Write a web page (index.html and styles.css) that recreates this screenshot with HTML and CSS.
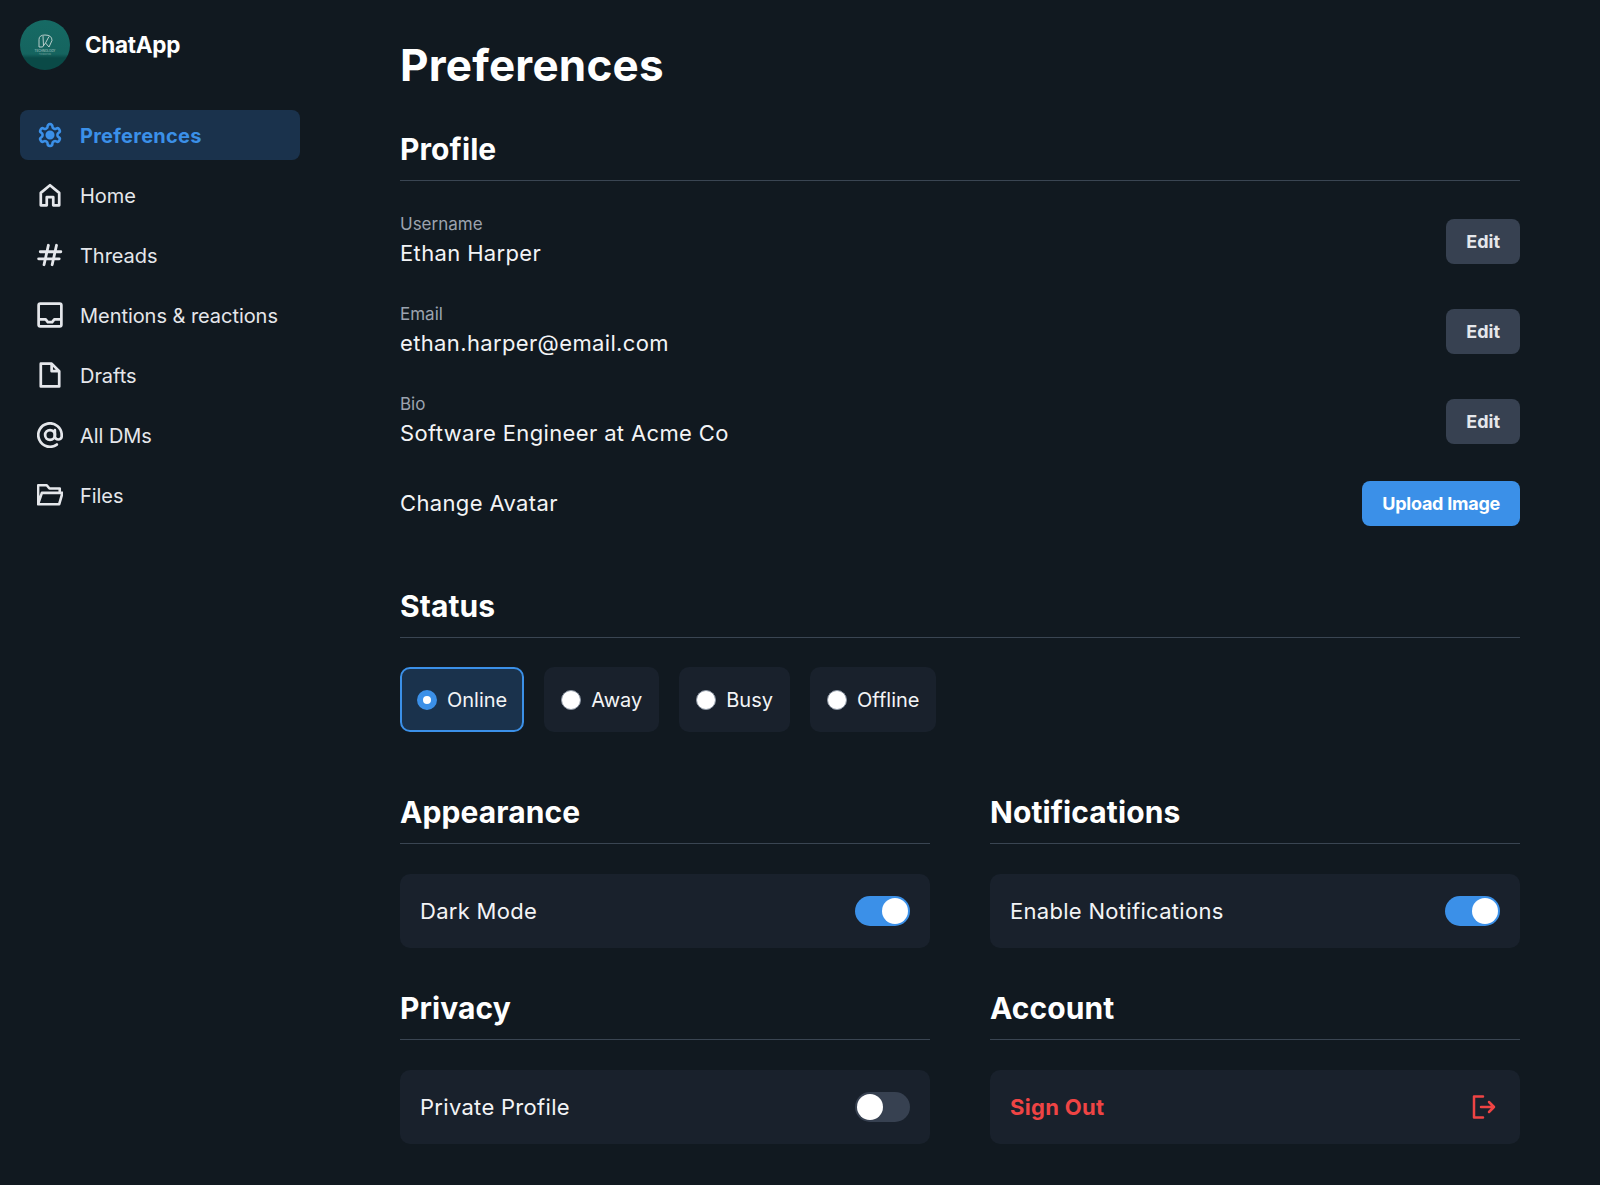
FILE: index.html

```html
<!DOCTYPE html>
<html lang="en">
<head>
  <meta charset="UTF-8" />
  <meta name="viewport" content="width=device-width, initial-scale=1.0"/>
  <title>Preferences - ChatApp</title>
  <link rel="stylesheet" href="styles.css">
</head>
<body>
  <div class="layout">
    <aside class="sidebar">
      <div class="brand">
        <div class="avatar">
          <svg viewBox="0 0 50 50" width="50" height="50">
            <path d="M19 27V19.500Q19 15 25 15Q32 15 32 20.500L29 27L25.500 23L22.500 27zM23 16L23.500 26M25.500 23L29 16.500" fill="none" stroke="#c9d8d6" stroke-width=".9"/>
            <text x="25" y="32" class="avatar-text">TECHNOLOGY</text>
            <text x="25" y="34.500" class="avatar-subtext">FOUNDATION</text>
          </svg>
        </div>
        <span class="brand-name">ChatApp</span>
      </div>
      <nav class="nav">
        <a class="nav-item active">
          <svg class="nav-icon" viewBox="0 0 24 24" fill="none" stroke="currentColor" stroke-width="2.400" stroke-linecap="round" stroke-linejoin="round"><path d="M12.220 2h-.44a2 2 0 0 0-2 2v.18a2 2 0 0 1-1 1.730l-.43.250a2 2 0 0 1-2 0l-.15-.08a2 2 0 0 0-2.730.730l-.22.380a2 2 0 0 0 .730 2.730l.15.100a2 2 0 0 1 1 1.720v.510a2 2 0 0 1-1 1.740l-.15.090a2 2 0 0 0-.730 2.730l.22.380a2 2 0 0 0 2.730.730l.15-.08a2 2 0 0 1 2 0l.43.250a2 2 0 0 1 1 1.730V20a2 2 0 0 0 2 2h.44a2 2 0 0 0 2-2v-.18a2 2 0 0 1 1-1.730l.43-.250a2 2 0 0 1 2 0l.15.080a2 2 0 0 0 2.730-.730l.22-.390a2 2 0 0 0-.730-2.730l-.15-.080a2 2 0 0 1-1-1.740v-.500a2 2 0 0 1 1-1.740l.15-.090a2 2 0 0 0 .730-2.730l-.22-.380a2 2 0 0 0-2.730-.730l-.15.080a2 2 0 0 1-2 0l-.43-.250a2 2 0 0 1-1-1.730V4a2 2 0 0 0-2-2z"/><circle cx="12" cy="12" r="3" fill="currentColor"/></svg>
          Preferences
        </a>
        <a class="nav-item">
          <svg class="nav-icon" viewBox="0 0 24 24" fill="none" stroke="currentColor" stroke-width="2.500" stroke-linejoin="round"><path d="M3.500 21.500V10l8.500-7 8.500 7v11.500h-5.500V14H9v7.500z"/></svg>
          Home
        </a>
        <a class="nav-item">
          <svg class="nav-icon" viewBox="0 0 24 24" fill="none" stroke="currentColor" stroke-width="2.600" stroke-linecap="round"><path d="M3 9h19M1.500 15.500h19M10.500 3L6.500 21M18 3L14 21"/></svg>
          Threads
        </a>
        <a class="nav-item">
          <svg class="nav-icon" viewBox="0 0 24 24" fill="none" stroke="currentColor" stroke-width="2.500" stroke-linejoin="round"><rect x="1.500" y="1.500" width="21" height="21" rx="1.500"/><path d="M2 16h6l2 2.500h4l2-2.500h6"/></svg>
          Mentions &amp; reactions
        </a>
        <a class="nav-item">
          <svg class="nav-icon" viewBox="0 0 24 24" fill="none" stroke="currentColor" stroke-width="2.500" stroke-linejoin="round"><path d="M3.500 1.500h10l7 7v14h-17zM13.500 1.500V8.500h7"/></svg>
          Drafts
        </a>
        <a class="nav-item">
          <svg class="nav-icon" viewBox="0 0 24 24" fill="none" stroke="currentColor" stroke-width="2.500" stroke-linecap="round"><circle cx="12" cy="12" r="4.500"/><path d="M16.500 7.500v6a3.200 3.200 0 0 0 6.300 0V12a10.800 10.800 0 1 0-4.500 8.800"/></svg>
          All DMs
        </a>
        <a class="nav-item">
          <svg class="nav-icon" viewBox="0 0 24 24" fill="none" stroke="currentColor" stroke-width="2.400" stroke-linejoin="round"><path d="M1 20.500V3h8l2.500 3h9.500v4M1 20.500h19.500l3-10.500H4.500z"/></svg>
          Files
        </a>
      </nav>
    </aside>

    <main class="main">
      <h1 class="page-title">Preferences</h1>

      <section class="profile">
        <h2 class="section-title">Profile</h2>
        <div class="field">
          <div>
            <div class="field-label">Username</div>
            <div class="field-value">Ethan Harper</div>
          </div>
          <button class="btn btn-edit">Edit</button>
        </div>
        <div class="field">
          <div>
            <div class="field-label">Email</div>
            <div class="field-value">ethan.harper@email.com</div>
          </div>
          <button class="btn btn-edit">Edit</button>
        </div>
        <div class="field">
          <div>
            <div class="field-label">Bio</div>
            <div class="field-value">Software Engineer at Acme Co</div>
          </div>
          <button class="btn btn-edit">Edit</button>
        </div>
        <div class="field avatar-field">
          <div class="field-value">Change Avatar</div>
          <button class="btn btn-primary">Upload Image</button>
        </div>
      </section>

      <section class="status">
        <h2 class="section-title">Status</h2>
        <div class="status-list">
          <label class="status-option selected"><span class="radio"></span>Online</label>
          <label class="status-option"><span class="radio"></span>Away</label>
          <label class="status-option"><span class="radio"></span>Busy</label>
          <label class="status-option"><span class="radio"></span>Offline</label>
        </div>
      </section>

      <div class="settings-grid">
        <section>
          <h2 class="section-title">Appearance</h2>
          <div class="card">
            <span>Dark Mode</span>
            <span class="toggle on"></span>
          </div>
        </section>
        <section>
          <h2 class="section-title">Notifications</h2>
          <div class="card">
            <span>Enable Notifications</span>
            <span class="toggle on"></span>
          </div>
        </section>
        <section>
          <h2 class="section-title">Privacy</h2>
          <div class="card">
            <span>Private Profile</span>
            <span class="toggle"></span>
          </div>
        </section>
        <section>
          <h2 class="section-title">Account</h2>
          <div class="card signout">
            <span>Sign Out</span>
            <svg viewBox="0 0 24 24" width="24" height="24" fill="none" stroke="currentColor" stroke-width="2.500" stroke-linecap="round" stroke-linejoin="round"><path d="M11 1.500H2v21h9M9 12h13M17 7l5 5-5 5"/></svg>
          </div>
        </section>
      </div>
    </main>
  </div>
</body>
</html>
```

FILE: styles.css

```css
* {
  box-sizing: border-box;
}
body {
  margin: 0;
  font-family: Inter, "Liberation Sans", sans-serif;
  background: #111920;
  color: #fff;
}
.layout {
  display: flex;
  min-height: 1185px;
}
.sidebar {
  width: 320px;
  flex-shrink: 0;
  padding: 20px;
}
.brand {
  display: flex;
  align-items: center;
  gap: 15px;
  margin-bottom: 40px;
}
.avatar {
  width: 50px;
  height: 50px;
  border-radius: 50%;
  overflow: hidden;
  background: linear-gradient(#166a64 0%, #15645f 68%, #0a4a47 76%, #0a4a47 100%);
}
.avatar svg {
  display: block;
}
.avatar-text {
  font-size: 3px;
  text-anchor: middle;
  fill: #b7d0cd;
}
.avatar-subtext {
  font-size: 1.800px;
  text-anchor: middle;
  fill: #7fa8a3;
}
.brand-name {
  margin-top: -2px;
  font-size: 22.500px;
  font-weight: 700;
  letter-spacing: -0.3px;
}
.nav {
  display: flex;
  flex-direction: column;
  gap: 10px;
}
.nav-item {
  display: flex;
  align-items: center;
  gap: 17px;
  height: 50px;
  padding: 2px 17px 0;
  border-radius: 8px;
  font-size: 20px;
  letter-spacing: -0.05px;
  color: #e5e7eb;
}
.nav-item.active {
  background: #1a324c;
  color: #3b90e8;
  font-weight: 700;
  letter-spacing: 0.25px;
}
.nav-icon {
  width: 26px;
  height: 26px;
  margin-top: -2px;
  flex-shrink: 0;
}
.main {
  flex: 1;
  padding: 30px 80px 0;
}
.page-title {
  margin: 0 0 31px;
  font-size: 44px;
  line-height: 70px;
  font-weight: 700;
  letter-spacing: 0.2px;
}
.section-title {
  margin: 0;
  padding-bottom: 13px;
  border-bottom: 1px solid #3a4552;
  font-size: 30px;
  line-height: 36px;
  font-weight: 700;
  letter-spacing: 0.1px;
}
.field {
  display: flex;
  align-items: center;
  justify-content: space-between;
  margin-top: 30px;
}
.field + .field {
  margin-top: 32px;
}
.field-label {
  font-size: 17px;
  line-height: 26px;
  color: #9ca3af;
}
.field-value {
  font-size: 22px;
  line-height: 32px;
  letter-spacing: 0.36px;
  color: #f3f4f6;
}
.field + .avatar-field {
  margin-top: 31px;
}
.btn {
  height: 45px;
  padding: 0 20px;
  border: 0;
  border-radius: 8px;
  background: #374151;
  color: #e5e7eb;
  font-family: inherit;
  font-size: 18px;
  font-weight: 700;
}
.btn-edit {
  margin-top: 2px;
}
.btn-primary {
  margin-top: 1px;
  background: #3b90e8;
  color: #fff;
  letter-spacing: -0.25px;
}
.status {
  margin-top: 62px;
}
.status-list {
  display: flex;
  gap: 20px;
  margin-top: 29px;
}
.status-option {
  display: flex;
  align-items: center;
  gap: 10px;
  height: 65px;
  padding: 0 17px;
  border-radius: 10px;
  background: #19212c;
  font-size: 20px;
  color: #f3f4f6;
}
.status-option.selected {
  border: 2.500px solid #3b90e8;
  background: #1a324c;
  padding: 0 15px;
}
.radio {
  width: 20px;
  height: 20px;
  border-radius: 50%;
  background: #fff;
  border: 1px solid #8b95a3;
}
.selected .radio {
  background: #fff;
  border: 6.500px solid #3b90e8;
}
.settings-grid {
  display: grid;
  grid-template-columns: 1fr 1fr;
  column-gap: 60px;
  row-gap: 42px;
  margin-top: 62px;
}
.card {
  display: flex;
  align-items: center;
  justify-content: space-between;
  height: 74px;
  margin-top: 30px;
  padding: 0 20px;
  border-radius: 10px;
  background: #19212c;
  font-size: 22px;
  letter-spacing: 0.3px;
  color: #f3f4f6;
}
.toggle {
  display: flex;
  align-items: center;
  width: 55px;
  height: 30px;
  padding: 0 2px;
  border-radius: 15px;
  background: #374151;
}
.toggle::after {
  content: "";
  width: 26px;
  height: 26px;
  border-radius: 50%;
  background: #fff;
}
.toggle.on {
  justify-content: flex-end;
  background: #3b90e8;
}
.signout {
  padding-right: 24px;
  color: #ef4444;
  font-weight: 700;
}
```
